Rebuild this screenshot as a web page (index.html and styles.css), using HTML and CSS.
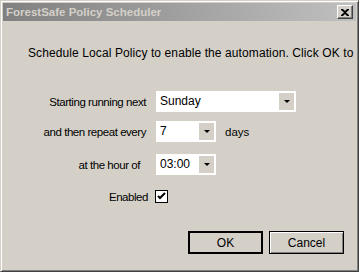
FILE: index.html
```html
<!DOCTYPE html>
<html lang="en">
<head>
    <meta charset="UTF-8">
    <title>ForestSafe Policy Scheduler</title>
    <link rel="stylesheet" href="styles.css">
</head>
<body>
    <div class="window">
        <div class="titlebar">
            <span class="title">ForestSafe Policy Scheduler</span>
            <button class="close-btn" aria-label="Close">
                <svg width="8" height="7" viewBox="0 0 8 7">
                    <path d="M0 0h2l2 2 2-2h2v1L5 3.5 8 6v1H6L4 5 2 7H0V6l3-2.5L0 1z" fill="#000"/>
                </svg>
            </button>
        </div>

        <div class="content">
            <p class="intro">Schedule Local Policy to enable the automation. Click OK to</p>

            <div class="row row-first">
                <label class="label">Starting running next</label>
                <div class="combo combo-wide">
                    <span class="combo-value">Sunday</span>
                    <span class="combo-btn"><span class="arrow"></span></span>
                </div>
            </div>

            <div class="row row-repeat">
                <label class="label">and then repeat every</label>
                <div class="combo combo-small">
                    <span class="combo-value">7</span>
                    <span class="combo-btn"><span class="arrow"></span></span>
                </div>
                <span class="unit">days</span>
            </div>

            <div class="row row-hour">
                <label class="label label-hour">at the hour of</label>
                <div class="combo combo-small">
                    <span class="combo-value">03:00</span>
                    <span class="combo-btn"><span class="arrow"></span></span>
                </div>
            </div>

            <div class="row row-enabled">
                <label class="label label-enabled">Enabled</label>
                <span class="checkbox">
                    <svg width="11" height="11" viewBox="0 0 11 11">
                        <path d="M2 5l2 2 5-5" stroke="#000" stroke-width="2" fill="none"/>
                    </svg>
                </span>
            </div>

            <div class="actions">
                <button class="btn btn-default">OK</button>
                <button class="btn">Cancel</button>
            </div>
        </div>
    </div>
</body>
</html>
```

FILE: styles.css
```css
* {
    box-sizing: border-box;
    margin: 0;
    padding: 0;
}

body {
    font-family: 'Liberation Sans', Arial, sans-serif;
    font-size: 12px;
    color: #000;
    background-color: #d4d0c8;
}

.window {
    width: 359px;
    height: 272px;
    padding: 2px;
    overflow: hidden;
    background-color: #d4d0c8;
    border: 1px solid;
    border-color: #d4d0c8 #404040 #404040 #d4d0c8;
    box-shadow: inset 1px 1px #fff, inset -1px -1px #808080;
    display: flex;
    flex-direction: column;
}

.titlebar {
    height: 18px;
    flex-shrink: 0;
    display: flex;
    align-items: center;
    padding: 0 3px 0 3px;
    background: linear-gradient(to right, #808080, #c0c0c0);
}

.title {
    font-size: 11.5px;
    font-weight: bold;
    color: #d4d0c8;
    white-space: nowrap;
}

.close-btn {
    margin-left: auto;
    width: 16px;
    height: 14px;
    display: flex;
    align-items: center;
    justify-content: center;
    background-color: #d4d0c8;
    border: 1px solid;
    border-color: #fff #404040 #404040 #fff;
    box-shadow: inset -1px -1px #808080;
}

.content {
    flex: 1;
    display: flex;
    flex-direction: column;
}

.intro {
    margin: 25px 0 0 25px;
    line-height: 14px;
    letter-spacing: 0.1px;
    white-space: nowrap;
}

.row {
    height: 21px;
    display: flex;
    align-items: center;
}

.row-first {
    margin-top: 31px;
}

.row-repeat {
    margin-top: 9px;
}

.row-hour {
    margin-top: 12px;
}

.row-enabled {
    margin-top: 11px;
}

.label {
    width: 143px;
    font-size: 11.5px;
    letter-spacing: -0.45px;
    text-align: right;
    white-space: nowrap;
    margin-right: 10px;
}

.label-hour {
    padding-right: 6px;
}

.label-enabled {
    width: 145px;
    margin-right: 7px;
}

.combo {
    height: 21px;
    padding: 2px;
    display: flex;
    background-color: #fff;
}

.combo-wide {
    width: 140px;
}

.combo-small {
    width: 60px;
}

.combo-value {
    flex: 1;
    line-height: 17px;
    padding-left: 2px;
}

.combo-btn {
    width: 15px;
    display: flex;
    align-items: center;
    justify-content: center;
    background-color: #d4d0c8;
}

.arrow {
    width: 0;
    height: 0;
    border-left: 3px solid transparent;
    border-right: 3px solid transparent;
    border-top: 3px solid #000;
}

.unit {
    margin-left: 9px;
    font-size: 11.5px;
}

.checkbox {
    width: 13px;
    height: 13px;
    display: flex;
    align-items: center;
    justify-content: center;
    background-color: #fff;
    border: 1px solid #000;
}

.actions {
    margin-top: 24px;
    padding-right: 12px;
    display: flex;
    justify-content: flex-end;
    gap: 6px;
}

.btn {
    width: 75px;
    height: 23px;
    font-family: 'Liberation Sans', Arial, sans-serif;
    font-size: 12px;
    color: #000;
    background-color: #d4d0c8;
    border: 1px solid #000;
    box-shadow: inset 1px 1px #fff, inset -1px -1px #808080;
}

.btn-default {
    border-width: 2px;
    box-shadow: none;
}
```
